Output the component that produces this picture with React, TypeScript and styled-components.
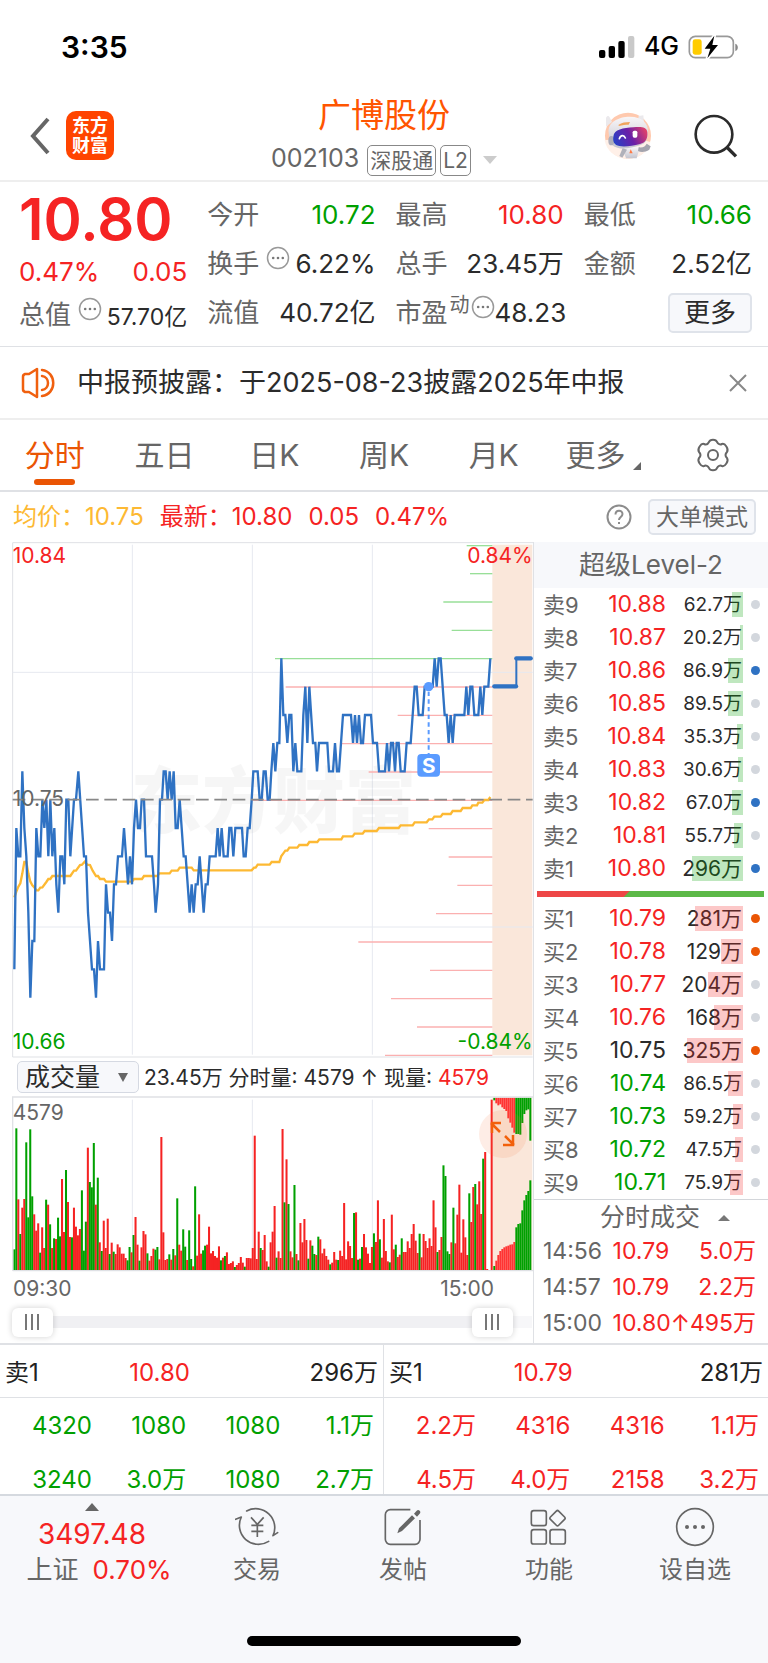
import React from "react";
import styled, { createGlobalStyle } from "styled-components";

const RED = "#f52323";
const GREEN = "#00a000";
const ORANGE = "#ea5504";
const BLUE = "#2f72c3";
const GREY = "#666666";
const INK = "#2b2b2b";
const LINE = "#dfe1e5";

type Tone = "red" | "green" | "ink" | "grey" | "amber";
const tones: Record<Tone, string> = {
  red: RED,
  green: GREEN,
  ink: INK,
  grey: GREY,
  amber: "#fdb933",
};

const GlobalStyle = createGlobalStyle`
  *, *::before, *::after { box-sizing: border-box; }
  body {
    margin: 0;
    background: #fff;
    color: ${INK};
    font-family: Inter, "Noto Sans CJK SC", sans-serif;
    font-size: 24px;
  }
  button, select, input { font: inherit; color: inherit; margin: 0; padding: 0; }
  button { background: none; border: 0; cursor: pointer; }
  a { color: inherit; text-decoration: none; }
  h1, h2, p, dl, dd, dt, ul, ol { margin: 0; padding: 0; font-weight: 400; list-style: none; }
  svg { display: block; }
`;

const Page = styled.div`
  display: flex;
  flex-direction: column;
  min-height: 100vh;
  line-height: 1;
  white-space: nowrap;
`;

/* ---------- status bar ---------- */

const StatusBar = styled.div`
  display: flex;
  align-items: center;
  justify-content: space-between;
  height: 95px;
  padding: 0 29px 2px 61px;
  color: #000;
`;

const Clock = styled.time`
  font-size: 30px;
  font-weight: 600;
`;

const StatusIcons = styled.div`
  display: flex;
  align-items: center;
  gap: 9px;
  font-size: 25px;
  font-weight: 500;
`;

/* ---------- header ---------- */

const Header = styled.header`
  display: grid;
  grid-template-columns: 1fr auto 1fr;
  align-items: center;
  height: 87px;
  padding: 0 30px 4px;
  border-bottom: 2px solid #eeeeee;
`;

const HeaderSide = styled.div<{ $end?: boolean }>`
  display: flex;
  align-items: center;
  justify-content: ${(p) => (p.$end ? "flex-end" : "flex-start")};
  gap: ${(p) => (p.$end ? 42 : 16)}px;
`;

const Logo = styled.a`
  display: grid;
  place-content: center;
  width: 48px;
  height: 49px;
  border-radius: 10px;
  background: #ff4400;
  color: #fff;
  font-size: 18px;
  font-weight: 700;
  line-height: 20px;
  text-align: center;
`;

const Title = styled.div`
  display: flex;
  flex-direction: column;
  align-items: center;
  gap: 11px;
`;

const StockName = styled.h1`
  color: #ff5500;
  font-size: 33px;
  line-height: 38px;
`;

const CodeRow = styled.div`
  display: flex;
  align-items: center;
  gap: 4px;
  color: ${GREY};
  font-size: 25px;
`;

const Code = styled.span`
  padding: 0 4px 4px 0;
`;

const Tag = styled.span`
  padding: 0 2px;
  border: 1px solid #888;
  border-radius: 5px;
  font-size: 21px;
  line-height: 29px;
`;

const Caret = styled.svg`
  margin-left: 8px;
`;

/* ---------- quote ---------- */

const Quote = styled.section`
  display: grid;
  grid-template-columns: repeat(4, minmax(0, 1fr));
  column-gap: 20px;
  padding: 8px 16px 9px 19px;
  border-bottom: 1px solid ${LINE};
`;

const QuoteColumn = styled.dl<{ $lead?: boolean }>`
  display: grid;
  grid-template-columns: minmax(0, 1fr);
  grid-template-rows: ${(p) => (p.$lead ? "58px 48px 38px" : "repeat(3, 49px)")};
`;

const QuoteRow = styled.div`
  display: flex;
  align-items: center;
  justify-content: space-between;
`;

const QuoteLabel = styled.dt`
  display: flex;
  align-items: center;
  gap: 7px;
  color: ${GREY};
  font-size: 26px;

  svg { margin-bottom: 12px; }
`;

const LabelNote = styled.span`
  margin: 0 -6px 16px -5px;
  font-size: 20px;
`;

const QuoteValue = styled.dd<{ $tone: Tone; $small?: boolean }>`
  color: ${(p) => tones[p.$tone]};
  font-size: ${(p) => (p.$small ? 23 : 26)}px;
  padding-top: ${(p) => (p.$small ? 4 : 0)}px;
`;

const LastPrice = styled.dd`
  color: ${RED};
  font-size: 58px;
  font-weight: 600;
`;

const SoftButton = styled.button`
  border: 2px solid #dfe3ea;
  border-radius: 5px;
  background: #f7f8fb;
  color: ${GREY};
  font-size: 23px;
  line-height: 32px;
  padding: 0 6px;
`;

const MoreButton = styled(SoftButton)`
  padding: 0 14px;
  color: ${INK};
  font-size: 26px;
  line-height: 36px;
  margin-left: auto;
`;

/* ---------- notice ---------- */

const Notice = styled.section`
  display: flex;
  align-items: center;
  gap: 20px;
  height: 73px;
  padding: 0 21px;
  border-bottom: 2px solid #eeeeee;
  font-size: 27px;
`;

const NoticeLink = styled.a`
  flex: 1;
`;

/* ---------- tabs ---------- */

const Tabs = styled.nav`
  display: grid;
  grid-template-columns: repeat(7, minmax(0, 1fr));
  height: 72px;
  border-bottom: 2px solid ${LINE};
`;

const Tab = styled.button<{ $active?: boolean }>`
  position: relative;
  display: flex;
  align-items: center;
  justify-content: center;
  gap: 8px;
  color: ${(p) => (p.$active ? ORANGE : GREY)};
  font-size: 30px;

  &::after {
    content: ${(p) => (p.$active ? '""' : "none")};
    position: absolute;
    left: calc(50% - 21px);
    bottom: 5px;
    width: 41px;
    height: 6px;
    border-radius: 3px;
    background: ${ORANGE};
  }

  svg.corner { margin-top: 22px; }
`;

/* ---------- legend ---------- */

const Legend = styled.div`
  display: flex;
  align-items: center;
  justify-content: space-between;
  height: 50px;
  padding: 0 12px 0 13px;
`;

const LegendGroup = styled.div`
  display: flex;
  align-items: center;
  gap: 16px;
`;

const LegendItem = styled.span<{ $tone: Tone }>`
  color: ${(p) => tones[p.$tone]};
  font-size: 24px;
`;

/* ---------- market area ---------- */

const Market = styled.main`
  display: grid;
  grid-template-columns: minmax(0, 1fr) 235px;
  border-bottom: 2px solid ${LINE};
`;

const ChartColumn = styled.section`
  display: flex;
  flex-direction: column;
  padding-left: 12px;
`;

const Chart = styled.svg`
  width: 100%;
  height: auto;
  font-family: Inter, "Noto Sans CJK SC", sans-serif;
`;

const VolumeBar = styled.div`
  display: flex;
  align-items: center;
  gap: 5px;
  height: 38px;
  padding-left: 5px;
  font-size: 21px;
`;

const SelectBox = styled.label`
  position: relative;
  display: flex;

  svg {
    position: absolute;
    right: 11px;
    top: 12px;
    pointer-events: none;
  }
`;

const IndexSelect = styled.select`
  appearance: none;
  width: 122px;
  height: 32px;
  padding: 0 7px;
  border: 1px solid #d5d9e2;
  border-radius: 5px;
  background: #f7f8fb;
  font-size: 25px;
  line-height: 30px;
`;

const Emphasis = styled.span`
  color: ${RED};
`;

const VolumePane = styled.div`
  position: relative;
`;

const ExpandButton = styled.button`
  position: absolute;
  top: 14px;
  right: 6px;
  width: 48px;
  height: 48px;
  border-radius: 50%;
  background: rgba(250, 110, 50, 0.12);
`;

const TimeAxis = styled.div`
  display: flex;
  justify-content: space-between;
  padding: 5px 39px 0 1px;
  color: ${GREY};
  font-size: 21px;
  line-height: 24px;
`;

const RangeSlider = styled.div`
  display: grid;
  margin: 6px 0 5px;
  width: 520px;
  max-width: 100%;
`;

const RangeInput = styled.input<{ $track?: boolean }>`
  grid-area: 1 / 1;
  appearance: none;
  width: 100%;
  height: 30px;
  background: ${(p) =>
    p.$track
      ? "linear-gradient(#f0f0f3, #f0f0f3) left center / 92% 12px no-repeat, linear-gradient(#f7f7f9, #f7f7f9) center / 100% 12px no-repeat"
      : "none"};
  pointer-events: none;

  &::-webkit-slider-thumb {
    appearance: none;
    pointer-events: auto;
    width: 41px;
    height: 29px;
    border-radius: 6px;
    background:
      linear-gradient(#777, #777) 13px center / 2px 16px no-repeat,
      linear-gradient(#777, #777) 19px center / 2px 16px no-repeat,
      linear-gradient(#777, #777) 25px center / 2px 16px no-repeat,
      #fff;
    box-shadow: 0 0 6px rgba(0, 0, 0, 0.18);
  }
`;

/* ---------- order book ---------- */

const BookColumn = styled.aside`
  border-left: 1px solid ${LINE};
`;

const BookTitle = styled.h2`
  background: #f7f8fb;
  color: ${GREY};
  font-size: 26px;
  line-height: 46px;
  text-align: center;
`;

const BookTable = styled.table`
  width: 100%;
  border-collapse: collapse;
  table-layout: fixed;

  td, th { height: 33px; padding: 0; font-weight: 400; }
`;

const LevelName = styled.th`
  width: 56px;
  color: ${GREY};
  font-size: 22px;
  text-align: left;

  && { padding-left: 9px; }
`;

const LevelPrice = styled.td<{ $tone: Tone }>`
  color: ${(p) => tones[p.$tone]};
  font-size: 23px;
  text-align: right;
`;

const LevelVolume = styled.td<{ $long: boolean }>`
  position: relative;
  width: 77px;
  font-size: ${(p) => (p.$long ? 19 : 21)}px;
  text-align: right;

  && { padding-right: 1px; }
`;

const DepthBar = styled.i<{ $buy: boolean }>`
  position: absolute;
  top: 4px;
  right: 0;
  height: 25px;
  background: ${(p) => (p.$buy ? "rgba(245, 35, 35, 0.25)" : "rgba(0, 160, 0, 0.25)")};
`;

const LevelDot = styled.td<{ $color: string }>`
  width: 25px;

  &::before {
    content: "";
    display: block;
    width: 9px;
    height: 9px;
    margin-left: 8px;
    border-radius: 50%;
    background: ${(p) => p.$color};
  }
`;

const RatioBar = styled.div`
  height: 6px;
  margin: 6px 4px 5px 3px;
  background: linear-gradient(135deg, #ee4646 65px, #5cb947 66px);
`;

const TradesHead = styled.button`
  display: flex;
  align-items: center;
  justify-content: center;
  gap: 18px;
  width: 100%;
  height: 36px;
  padding-left: 28px;
  border-top: 1px solid #d3d6da;
  color: ${GREY};
  font-size: 25px;
`;

const TradesTable = styled.table`
  width: 100%;
  border-collapse: collapse;
  font-size: 23px;

  td { height: 36px; padding: 0 0 3px; color: ${RED}; }
  td:first-child { padding-left: 9px; color: ${GREY}; }
  td:nth-child(2) { width: 76px; }
  td:last-child { width: 76px; padding-right: 12px; text-align: right; }
`;

/* ---------- order detail ---------- */

const Details = styled.section`
  display: grid;
  grid-template-columns: 1fr 1fr;
  height: 149px;
  overflow: hidden;
`;

const DetailTable = styled.table<{ $tone: Tone }>`
  width: 100%;
  height: max-content;
  border-collapse: collapse;
  table-layout: fixed;
  border-right: 1px solid ${LINE};
  color: ${(p) => tones[p.$tone]};

  &:last-child { border-right: 0; }

  td {
    height: 54px;
    padding: 3px 9px 0 0;
    font-size: 24px;
    text-align: right;
  }
`;

const LeadColumn = styled.col`
  width: 101px;
`;

const DetailHead = styled.th`
  padding: 0;
  border-bottom: 1px solid ${LINE};
  font-weight: 400;
`;

const DetailHeadRow = styled.div`
  display: grid;
  grid-template-columns: 1fr 1fr 1fr;
  padding: 3px 5px 0;
  color: #222;
  font-size: 24px;
  line-height: 49px;
  text-align: left;

  span:last-child { text-align: right; }
`;

/* ---------- bottom navigation ---------- */

const BottomBar = styled.footer`
  flex: 1;
  display: flex;
  flex-direction: column;
  justify-content: space-between;
  background: #f7f8fb;
  border-top: 2px solid #d5d9df;
`;

const BottomNav = styled.nav`
  display: grid;
  grid-template-columns: 184fr repeat(4, 146fr);
`;

const IndexLink = styled.a`
  display: flex;
  flex-direction: column;
  align-items: center;
  padding-top: 7px;
  color: ${RED};
  font-size: 28px;
  line-height: 46px;
`;

const IndexMove = styled.span`
  display: flex;
  gap: 14px;
  padding-left: 14px;
  font-size: 26px;
  line-height: 26px;
`;

const IndexName = styled.span`
  color: ${GREY};
`;

const NavLink = styled.a`
  display: flex;
  flex-direction: column;
  align-items: center;
  gap: 6px;
  padding-top: 10px;
  color: ${GREY};
  font-size: 24px;
  line-height: 32px;
`;

const HomeIndicator = styled.div`
  width: 274px;
  height: 10px;
  margin: 0 auto 17px;
  border-radius: 5px;
  background: #000;
`;

/* ---------- data ---------- */

const priceSteps =
  "43,-6 49,-1 55,-2 61,-2 67,1 73,-1 79,-2 85,-4 91,-7 97,-5 103,-5 109,-1 115,-2 121,-2 127,0 133,-1 139,0 145,-2 151,0 157,-2 163,-1 169,-3 175,-4 181,-2 187,-2 193,-3 199,0 205,0 211,-2 222,0 228,0 235,1 252,-2 258,-2 264,-4 270,-5 276,-6 282,-6 288,-7 294,-5 300,-6 312,-6 318,-3 324,-4 330,-4 336,-5 342,-3 348,-3 354,-2 366,-2 372,-1 378,-2 384,-3 390,-2 396,-3 402,-1 408,0 414,-1 420,-1 425,0 432,0 438,-2 456,-2 462,-3 467,-4 474,-3 480,0 486,0 491,1 497,1 503,0 509,1 515,0 521,1 527,-1 533,-1 539,0 545,-1 551,-2 557,-2 563,-3 569,-4 575,-3 581,-4 587,-3 593,-3 599,-2 605,-3 611,-4 617,-3 623,-3 629,-2 647,-2 653,-1 659,-2 665,-1 671,-2 683,-2 688,-1 694,-1 700,-2 706,-1 726,-1 731,-2 737,-2 743,-1 749,-1 755,0 760,1 773,1 779,0 785,0 791,1 797,1 803,0 809,0 814,1 820,2 826,1 832,2 838,2 844,5 850,3 856,3 862,2 868,3 874,3 880,1 886,2 892,1 904,1 910,3 916,4 922,2 928,4 939,2 946,2 951,1 957,2 982,2 987,1 999,1 1005,2 1011,1 1017,1 1023,2 1029,3 1053,3 1059,2 1065,3 1071,2 1077,3 1083,2 1089,2 1095,3 1113,3 1119,2 1131,2 1137,1 1155,1 1161,2 1167,1 1173,2 1179,2 1185,1 1190,2 1196,2 1202,1 1214,1 1220,2 1232,2 1238,3 1244,4 1250,4 1256,3 1268,3 1274,4 1298,4 1304,5 1310,4 1316,5 1322,5 1328,4 1334,3 1340,3 1346,2 1352,3 1358,2 1364,3 1393,3 1399,4 1405,3 1411,4 1417,4 1423,3 1435,3 1441,4 1447,3 1453,4 1465,4 1471,5";

const pricePoints = priceSteps
  .split(" ")
  .map((pair) => {
    const [x, ticks] = pair.split(",").map(Number);
    return `${x},${Math.round(779 - ticks * 84.8)}`;
  })
  .join(" ");

const averagePoints =
  "43,1072 49,1055 55,1040 61,1030 67,1000 73,966 79,966 85,1000 91,1025 97,1036 103,1042 109,1051 115,1051 121,1043 127,1042 139,1026 145,1017 151,1017 157,1008 211,1008 222,992 228,992 240,975 246,974 254,965 262,974 270,975 278,992 288,1008 294,1008 300,1017 312,1017 318,1025 396,1025 402,1017 426,1017 432,1008 472,1008 478,1000 509,1000 515,992 533,992 539,983 575,983 581,991 755,991 762,983 767,983 773,974 809,974 815,966 838,966 844,948 850,940 856,932 862,932 868,923 892,923 898,915 922,915 928,906 952,906 958,898 1024,898 1029,889 1058,889 1064,881 1088,881 1094,873 1130,873 1137,864 1196,864 1202,856 1238,856 1244,847 1280,847 1287,838 1297,838 1303,830 1322,830 1328,822 1352,822 1358,813 1382,813 1388,804 1412,804 1417,796 1431,796 1435,788 1447,788 1453,780 1465,780 1471,771";

const depthLines: [number, number, boolean][] = [
  [17, 1400, false], [101, 1410, false], [186, 1330, false], [271, 1355, false], [356, 825, false],
  [441, 857, true], [526, 1193, true], [611, 1026, true], [696, 1106, true], [781, 757, true],
  [866, 1286, true], [951, 1346, true], [1036, 1372, true], [1121, 1308, true], [1206, 1075, true],
  [1291, 1290, true], [1376, 1173, true], [1461, 1251, true], [1546, 1155, true],
];

const volumeBars =
  "g598 g235 r448 g552 r473 r447 g277 g502 g238 g439 r493 r542 r520 g608 r532 r594 g449 r464 g523 r594 g565 r567 g503 g559 r387 r546 g360 r456 r561 g562 r473 r530 r556 r537 g421 g602 g515 r293 g396 g412 g279 r464 g383 r577 g603 r512 r594 r506 g612 r578 g605 r612 r583 r592 r611 r611 r624 g631 g591 r607 g555 r501 r584 g632 r592 r543 r553 g610 r632 r618 r596 g599 g591 r628 r261 r547 r630 r627 g613 r629 g597 r616 g445 r584 r602 g538 g590 r630 g541 g627 r649 g409 r617 r493 r611 g601 g587 r584 r530 r610 r603 r618 r623 r589 g631 r623 g618 r607 r642 r639 r634 g651 r645 r639 r621 r638 g650 r624 r624 r625 r594 r257 r627 r545 g594 r600 r555 r634 g650 r577 r545 r468 g623 r604 r624 r237 g457 r328 g462 r604 r622 g405 r612 g631 r519 r577 r507 r570 g626 r571 g587 g612 r615 g560 r568 r610 r596 r618 r629 g643 r638 r606 r629 g630 r602 r618 r459 r628 r574 r588 r624 g489 r487 g629 r626 g591 r552 r592 r611 r639 r591 g550 r576 r451 g568 r623 r507 r603 r634 g637 r494 r598 g584 r621 r614 g565 r606 r606 r574 r594 r552 r522 r572 r609 g551 r622 r552 r573 r594 r565 r588 r451 r532 g606 r600 r561 g346 g378 g604 g612 r577 g473 r580 r494 r404 r608 r508 r562 r615 g430 r516 r411 g402 r463 r394 r492 g326 r306 r657"
    .split(" ")
    .map((item) => ({ up: item[0] === "r", top: Number(item.slice(1)) }));

const auctionTop = [151, 160, 166, 163, 172, 177, 183, 205, 218, 233, 248, 252, 252, 254, 219, 192, 181, 178, 272];
const auctionBottom = [648, 632, 615, 603, 597, 592, 589, 587, 584, 583, 576, 532, 522, 520, 481, 451, 435, 423, 391];
const auctionColor = (i: number) => (i === 0 || i > 10 ? GREEN : "#f33");

interface Level {
  name: string;
  price: string;
  volume: string;
  bar: number;
  tone?: Tone;
  marked?: boolean;
}

const sells: Level[] = [
  { name: "卖9", price: "10.88", volume: "62.7万", bar: 11 },
  { name: "卖8", price: "10.87", volume: "20.2万", bar: 3 },
  { name: "卖7", price: "10.86", volume: "86.9万", bar: 15, marked: true },
  { name: "卖6", price: "10.85", volume: "89.5万", bar: 15 },
  { name: "卖5", price: "10.84", volume: "35.3万", bar: 6 },
  { name: "卖4", price: "10.83", volume: "30.6万", bar: 5 },
  { name: "卖3", price: "10.82", volume: "67.0万", bar: 11, marked: true },
  { name: "卖2", price: "10.81", volume: "55.7万", bar: 9 },
  { name: "卖1", price: "10.80", volume: "296万", bar: 51, marked: true },
];

const buys: Level[] = [
  { name: "买1", price: "10.79", volume: "281万", bar: 48, marked: true },
  { name: "买2", price: "10.78", volume: "129万", bar: 22, marked: true },
  { name: "买3", price: "10.77", volume: "204万", bar: 35 },
  { name: "买4", price: "10.76", volume: "168万", bar: 29 },
  { name: "买5", price: "10.75", volume: "325万", bar: 56, tone: "ink", marked: true },
  { name: "买6", price: "10.74", volume: "86.5万", bar: 15, tone: "green" },
  { name: "买7", price: "10.73", volume: "59.2万", bar: 10, tone: "green" },
  { name: "买8", price: "10.72", volume: "47.5万", bar: 8, tone: "green" },
  { name: "买9", price: "10.71", volume: "75.9万", bar: 13, tone: "green" },
];

const trades = [
  ["14:56", "10.79", "5.0万"],
  ["14:57", "10.79", "2.2万"],
  ["15:00", "10.80↑", "495万"],
];

/* ---------- icons ---------- */

const InfoDots = () => (
  <svg width="24" height="24" viewBox="0 0 24 24" fill="none" stroke="#999" strokeWidth="1.5" aria-hidden="true">
    <circle cx="12" cy="12" r="10.5" />
    <g fill="#777" stroke="none">
      <circle cx="7.2" cy="12" r="1.3" />
      <circle cx="12" cy="12" r="1.3" />
      <circle cx="16.8" cy="12" r="1.3" />
    </g>
  </svg>
);

const SignalIcon = () => (
  <svg width="36" height="22" viewBox="0 0 108 66" aria-label="信号">
    <rect x="0" y="42" width="19" height="24" rx="6" />
    <rect x="29" y="30" width="19" height="36" rx="6" />
    <rect x="58" y="15" width="19" height="51" rx="6" />
    <rect x="87" y="0" width="19" height="66" rx="6" fill="#c9c9c9" />
  </svg>
);

const BatteryIcon = () => (
  <svg width="51" height="24" viewBox="0 0 153 72" aria-label="电量">
    <rect x="4" y="4" width="132" height="64" rx="18" fill="none" stroke="#999" strokeWidth="5" />
    <path d="M142 26c10 3 10 19 0 22z" fill="#888" />
    <rect x="14" y="13" width="27" height="46" rx="7" fill="#ffcc00" />
    <path d="M79 2 50 41h17l-9 29 32-40H73z" fill="#000" stroke="#fff" strokeWidth="10" strokeLinejoin="round" paintOrder="stroke" />
  </svg>
);

const RobotIcon = () => (
  <svg width="48" height="48" viewBox="0 0 144 144" aria-hidden="true">
    <defs>
      <linearGradient id="visor" x1="0" y1="0.6" x2="1" y2="0.3">
        <stop offset="0" stopColor="#2b3fc4" />
        <stop offset="0.5" stopColor="#6a1fa8" />
        <stop offset="1" stopColor="#e0406a" />
      </linearGradient>
      <linearGradient id="shell" x1="0" y1="0" x2="0" y2="1">
        <stop offset="0" stopColor="#f8f6f8" />
        <stop offset="1" stopColor="#c4c4ce" />
      </linearGradient>
    </defs>
    <circle cx="72" cy="71" r="69" fill="#ffc9ae" />
    <path d="M2 84c4 30 32 57 70 56 34 0 60-20 67-50l-30-8z" fill="#fff0e8" />
    <path d="M54 105h54l-10 34H66z" fill="url(#shell)" />
    <path d="M56 108 46 132l9 5 14-24z" fill="#b0b1ba" />
    <path d="M104 106c14 2 20-4 24-11l12 8-4 10c-12 8-26 8-34 4z" fill="#a4a4ae" />
    <path d="M6 18c4-8 8-8 12 0l6 12-18 14zM104 12l14-2 2 24-18-8z" fill="#ebe9ec" />
    <path d="M14 62C10 32 42 14 78 14s54 20 54 44c0 20-4 36-24 42-24 8-54 14-72 6C20 100 16 82 14 62z" fill="url(#shell)" />
    <ellipse cx="22" cy="86" rx="9" ry="14" fill="#adaeba" />
    <path d="M28 74c2-22 30-26 60-28 22-2 40-2 42 14 2 18-4 32-22 36-22 5-46 10-62 6-15-3-20-12-18-28z" fill="url(#visor)" />
    <path d="M46 80c4-12 14-12 18-2" fill="none" stroke="#fff" strokeWidth="5" strokeLinecap="round" />
    <rect x="86" y="56" width="14" height="21" rx="5" fill="#fff" />
    <path d="M44 38c8-6 22-8 34-8l-4 8c-10 0-18 1-30 4z" fill="#f0a45c" />
    <path d="m80 112 6 12H76z" fill="#ff7a45" />
  </svg>
);

const SearchIcon = () => (
  <svg width="44" height="44" viewBox="0 0 132 132" fill="none" stroke="#2b2b2b" strokeWidth="8" aria-hidden="true">
    <circle cx="60" cy="61" r="55" />
    <path d="m98 99 28 28" strokeWidth="10" />
  </svg>
);

const YuanIcon = () => (
  <svg width="44" height="42" viewBox="0 0 132 126" fill="none" stroke="#666" strokeWidth="5" strokeLinecap="round" strokeLinejoin="round" aria-hidden="true">
    <path d="M35 15a57 57 0 0 1 79 74l14-9" />
    <path d="M2 40l17-7a57 57 0 0 0 82 73" />
    <path d="m48 34 19 21 19-21M67 55v38M49 58h36M49 76h36" strokeLinecap="butt" />
  </svg>
);

const ComposeIcon = () => (
  <svg width="42" height="42" viewBox="0 0 126 126" fill="none" stroke="#666" strokeWidth="5" aria-hidden="true">
    <path d="M85 11H25a15 15 0 0 0-15 15v74a15 15 0 0 0 15 15h74a15 15 0 0 0 15-15V42" />
    <path d="m46 82 5-15 39-39 9 9-39 38zM96 23l8-9c6-6 15 3 9 9l-8 9z" fill="#666" stroke="none" />
  </svg>
);

const GridIcon = () => (
  <svg width="42" height="42" viewBox="0 0 126 126" fill="none" stroke="#666" strokeWidth="5" strokeLinejoin="round" aria-hidden="true">
    <rect x="10" y="14" width="45" height="45" rx="7" />
    <rect x="10" y="71" width="45" height="43" rx="7" />
    <rect x="66" y="71" width="46" height="43" rx="7" />
    <rect x="71" y="19" width="35" height="35" rx="5" transform="rotate(45 88.5 36.5)" />
  </svg>
);

const MoreIcon = () => (
  <svg width="42" height="42" viewBox="0 0 126 126" fill="none" stroke="#666" strokeWidth="5" aria-hidden="true">
    <circle cx="63" cy="63" r="55" />
    <g fill="#666" stroke="none">
      <circle cx="39" cy="63" r="6" />
      <circle cx="63" cy="63" r="6" />
      <circle cx="87" cy="63" r="6" />
    </g>
  </svg>
);

/* ---------- charts ---------- */

const PriceChart = () => (
  <Chart viewBox="36 6 1563 1548" role="img" aria-label="分时走势">
    <rect x="1477" y="14" width="120" height="1532" fill="#fae7da" />
    <g fill="none" stroke={LINE} strokeWidth="3">
      <path d="M38 1551V8H1599M38 1551H1598" />
      <path d="M397 14V1544M757 14V1544M1117 14V1544M38 397H1598M38 1161H1598" stroke="#e6e9f0" />
    </g>
    <text x="392" y="860" fontSize="214" fontWeight="900" fill="#999" opacity="0.08">
      东方财富
    </text>
    {depthLines.map(([y, x, buy]) => (
      <path key={y} d={`M${x} ${y}H1477`} stroke={buy ? "#fbb0b0" : "#98df98"} strokeWidth="4" />
    ))}
    <polyline points={averagePoints} fill="none" stroke="#fdb933" strokeWidth="7" />
    <polyline points={pricePoints} fill="none" stroke={BLUE} strokeWidth="7" />
    <path d="M38 779H1598" stroke="#888" strokeWidth="5" strokeDasharray="38 17" />
    <path d="M1483 439H1548" stroke={BLUE} strokeWidth="13" strokeLinecap="round" />
    <path d="M1549 439V355" stroke={BLUE} strokeWidth="6" />
    <path d="M1549 355H1592" stroke={BLUE} strokeWidth="13" strokeLinecap="round" />
    <circle cx="1286" cy="440" r="14" fill="#5a9bff" />
    <path d="M1286 455V642" stroke="#5a9bff" strokeWidth="6" strokeDasharray="13 10" />
    <rect x="1252" y="642" width="68" height="68" rx="12" fill="#5a9bff" />
    <text x="1286" y="698" fontSize="62" fontWeight="700" fill="#fff" textAnchor="middle">S</text>
    <g fontSize="63">
      <text x="38" y="69" fill={RED}>10.84</text>
      <text x="38" y="798" fill={GREY}>10.75</text>
      <text x="38" y="1527" fill={GREEN}>10.66</text>
      <text x="1598" y="69" fill={RED} textAnchor="end">0.84%</text>
      <text x="1598" y="1527" fill={GREEN} textAnchor="end">-0.84%</text>
    </g>
  </Chart>
);

const VolumeChart = () => (
  <Chart viewBox="36 138 1563 528" role="img" aria-label="成交量">
    <rect x="1477" y="143" width="120" height="517" fill="#fae7da" />
    <path d="M397 149V660M757 149V660M1117 149V660" stroke="#e6e9f0" strokeWidth="3" />
    {volumeBars.map((bar, i) => (
      <rect
        key={i}
        x={40 + i * 5.96}
        y={bar.top}
        width="6.1"
        height={660 - bar.top}
        fill={bar.up ? RED : GREEN}
      />
    ))}
    <rect x="1472" y="149" width="6" height="511" fill={RED} />
    {auctionTop.map((bottom, i) => (
      <rect key={i} x={1480 + i * 6} y="143" width="6" height={bottom - 143} fill={auctionColor(i)} />
    ))}
    {auctionBottom.map((top, i) => (
      <rect key={i} x={1480 + i * 6} y={top} width="6" height={660 - top} fill={auctionColor(i)} />
    ))}
    <path d="M38 662V141H1599M38 662H1599" fill="none" stroke={LINE} strokeWidth="4" />
    <text x="38" y="209" fontSize="63" fill={GREY}>4579</text>
  </Chart>
);

/* ---------- composed parts ---------- */

const Book = ({ levels, side }: { levels: Level[]; side: "sell" | "buy" }) => (
  <BookTable>
    <tbody>
      {levels.map((level) => (
        <tr key={level.name}>
          <LevelName scope="row">{level.name}</LevelName>
          <LevelPrice $tone={level.tone ?? "red"}>{level.price}</LevelPrice>
          <LevelVolume $long={level.volume.length > 4}>
            {level.volume}
            <DepthBar $buy={side === "buy"} style={{ width: level.bar }} />
          </LevelVolume>
          <LevelDot $color={level.marked ? (side === "buy" ? ORANGE : BLUE) : "#d3d7dd"} />
        </tr>
      ))}
    </tbody>
  </BookTable>
);

interface DetailProps {
  head: [string, string, string];
  rows: string[][];
  tone: Tone;
}

const Detail = ({ head, rows, tone }: DetailProps) => (
  <DetailTable $tone={tone}>
    <colgroup>
      <LeadColumn />
      <col />
      <col />
      <col />
    </colgroup>
    <thead>
      <tr>
        <DetailHead colSpan={4}>
          <DetailHeadRow>
            <span>{head[0]}</span>
            <Emphasis>{head[1]}</Emphasis>
            <span>{head[2]}</span>
          </DetailHeadRow>
        </DetailHead>
      </tr>
    </thead>
    <tbody>
      {rows.map((row, i) => (
        <tr key={i}>
          {row.map((cell, j) => (
            <td key={j}>{cell}</td>
          ))}
        </tr>
      ))}
    </tbody>
  </DetailTable>
);

const quoteColumns: { label: string; value: string; tone: Tone; info?: boolean; note?: string }[][] = [
  [
    { label: "今开", value: "10.72", tone: "green" },
    { label: "换手", value: "6.22%", tone: "ink", info: true },
    { label: "流值", value: "40.72亿", tone: "ink" },
  ],
  [
    { label: "最高", value: "10.80", tone: "red" },
    { label: "总手", value: "23.45万", tone: "ink" },
    { label: "市盈", value: "48.23", tone: "ink", info: true, note: "动" },
  ],
  [
    { label: "最低", value: "10.66", tone: "green" },
    { label: "金额", value: "2.52亿", tone: "ink" },
  ],
];

export default function App() {
  return (
    <Page>
      <GlobalStyle />
      <StatusBar>
        <Clock>3:35</Clock>
        <StatusIcons>
          <SignalIcon />
          <span>4G</span>
          <BatteryIcon />
        </StatusIcons>
      </StatusBar>

      <Header>
        <HeaderSide>
          <button aria-label="返回">
            <svg width="20" height="38" viewBox="0 0 20 38" fill="none" stroke="#666" strokeWidth="4">
              <path d="M18 2 3 19l15 17" />
            </svg>
          </button>
          <Logo href="#home">
            <span>东方</span>
            <span>财富</span>
          </Logo>
        </HeaderSide>
        <Title>
          <StockName>广博股份</StockName>
          <CodeRow>
            <Code>002103</Code>
            <Tag>深股通</Tag>
            <Tag>L2</Tag>
            <Caret width="14" height="8" viewBox="0 0 14 8" aria-hidden="true">
              <path d="M0 0h14L7 8z" fill="#ccc" />
            </Caret>
          </CodeRow>
        </Title>
        <HeaderSide $end>
          <button aria-label="智能助手">
            <RobotIcon />
          </button>
          <button aria-label="搜索">
            <SearchIcon />
          </button>
        </HeaderSide>
      </Header>

      <Quote>
        <QuoteColumn $lead>
          <QuoteRow>
            <LastPrice>10.80</LastPrice>
          </QuoteRow>
          <QuoteRow>
            <QuoteValue $tone="red">0.47%</QuoteValue>
            <QuoteValue $tone="red">0.05</QuoteValue>
          </QuoteRow>
          <QuoteRow>
            <QuoteLabel>
              总值
              <InfoDots />
            </QuoteLabel>
            <QuoteValue $tone="ink" $small>57.70亿</QuoteValue>
          </QuoteRow>
        </QuoteColumn>
        {quoteColumns.map((column, i) => (
          <QuoteColumn key={i}>
            {column.map((item) => (
              <QuoteRow key={item.label}>
                <QuoteLabel>
                  {item.label}
                  {item.note && <LabelNote>{item.note}</LabelNote>}
                  {item.info && <InfoDots />}
                </QuoteLabel>
                <QuoteValue $tone={item.tone}>{item.value}</QuoteValue>
              </QuoteRow>
            ))}
            {column.length < 3 && (
              <QuoteRow>
                <MoreButton>更多</MoreButton>
              </QuoteRow>
            )}
          </QuoteColumn>
        ))}
      </Quote>

      <Notice>
        <svg width="36" height="32" viewBox="0 0 36 32" fill="none" stroke="#f0600f" strokeWidth="2.500" strokeLinecap="round" strokeLinejoin="round" aria-hidden="true">
          <path d="M16 2v28l-8-5H4a3 3 0 0 1-2-3V10a3 3 0 0 1 2-3h4zM21 3c15 2 15 24 0 26M21 9c8 1 8 13 0 14" />
        </svg>
        <NoticeLink href="#notice">中报预披露：于2025-08-23披露2025年中报</NoticeLink>
        <button aria-label="关闭">
          <svg width="18" height="18" viewBox="0 0 18 18" stroke="#888" strokeWidth="2">
            <path d="m1 1 16 16M17 1 1 17" />
          </svg>
        </button>
      </Notice>

      <Tabs>
        <Tab $active>分时</Tab>
        <Tab>五日</Tab>
        <Tab>日K</Tab>
        <Tab>周K</Tab>
        <Tab>月K</Tab>
        <Tab>
          更多
          <svg className="corner" width="8" height="8" viewBox="0 0 8 8" aria-hidden="true">
            <path d="M8 0v8H0z" fill="#666" />
          </svg>
        </Tab>
        <Tab aria-label="设置">
          <svg width="34" height="34" viewBox="0 0 34 34" fill="none" stroke="#666" strokeWidth="2" strokeLinejoin="round">
            <path d="M13 4c1-3 7-3 8 0 1 2 3 3 5 2 3-1 7 5 5 8-2 2-2 4 0 6 2 3-2 9-5 8-2-1-4 0-5 2-1 3-7 3-8 0-1-2-3-3-5-2-3 1-7-5-5-8 2-2 2-4 0-6-2-3 2-9 5-8 2 1 4 0 5-2z" />
            <circle cx="17" cy="17" r="5" />
          </svg>
        </Tab>
      </Tabs>

      <Legend>
        <LegendGroup>
          <LegendItem $tone="amber">均价：10.75</LegendItem>
          <LegendItem $tone="red">最新：10.80</LegendItem>
          <LegendItem $tone="red">0.05</LegendItem>
          <LegendItem $tone="red">0.47%</LegendItem>
        </LegendGroup>
        <LegendGroup>
          <button aria-label="帮助">
            <svg width="26" height="26" viewBox="0 0 26 26" fill="none" stroke="#8c8c8c" strokeWidth="2">
              <circle cx="13" cy="13" r="11.5" />
              <path d="M9.5 10.5c0-5 7-5 7-.5 0 3-3.500 3-3.500 6M13 18v2" />
            </svg>
          </button>
          <SoftButton>大单模式</SoftButton>
        </LegendGroup>
      </Legend>

      <Market>
        <ChartColumn>
          <PriceChart />
          <VolumeBar>
            <SelectBox>
              <IndexSelect aria-label="指标" defaultValue="vol">
                <option value="vol">成交量</option>
              </IndexSelect>
              <svg width="10" height="9" viewBox="0 0 10 9" aria-hidden="true">
                <path d="M0 0h10L5 9z" fill="#666" />
              </svg>
            </SelectBox>
            <span>
              23.45万 分时量: 4579 ↑ 现量: <Emphasis>4579</Emphasis>
            </span>
          </VolumeBar>
          <VolumePane>
            <VolumeChart />
            <ExpandButton aria-label="展开">
              <svg width="48" height="48" viewBox="0 0 48 48" fill="none" stroke="#f2600c" strokeWidth="2.500">
                <path d="m21 22-9-9M13 23V13h9M26 26l9 9M34 25v10h-10" />
              </svg>
            </ExpandButton>
          </VolumePane>
          <TimeAxis>
            <span>09:30</span>
            <span>15:00</span>
          </TimeAxis>
          <RangeSlider>
            <RangeInput type="range" aria-label="开始时间" defaultValue={0} $track />
            <RangeInput type="range" aria-label="结束时间" defaultValue={96} />
          </RangeSlider>
        </ChartColumn>

        <BookColumn>
          <BookTitle>超级Level-2</BookTitle>
          <Book levels={sells} side="sell" />
          <RatioBar />
          <Book levels={buys} side="buy" />
          <TradesHead>
            分时成交
            <svg width="12" height="6" viewBox="0 0 12 6" aria-hidden="true">
              <path d="M0 6h12L6 0z" fill="#777" />
            </svg>
          </TradesHead>
          <TradesTable>
            <tbody>
              {trades.map((row) => (
                <tr key={row[0]}>
                  {row.map((cell, i) => (
                    <td key={i}>{cell}</td>
                  ))}
                </tr>
              ))}
            </tbody>
          </TradesTable>
        </BookColumn>
      </Market>

      <Details>
        <Detail
          tone="green"
          head={["卖1", "10.80", "296万"]}
          rows={[
            ["4320", "1080", "1080", "1.1万"],
            ["3240", "3.0万", "1080", "2.7万"],
          ]}
        />
        <Detail
          tone="red"
          head={["买1", "10.79", "281万"]}
          rows={[
            ["2.2万", "4316", "4316", "1.1万"],
            ["4.5万", "4.0万", "2158", "3.2万"],
          ]}
        />
      </Details>

      <BottomBar>
        <BottomNav>
          <IndexLink href="#index">
            <svg width="14" height="8" viewBox="0 0 14 8" aria-hidden="true">
              <path d="M0 8h14L7 0z" fill="#666" />
            </svg>
            3497.48
            <IndexMove>
              <IndexName>上证</IndexName>
              <span>0.70%</span>
            </IndexMove>
          </IndexLink>
          <NavLink href="#trade">
            <YuanIcon />
            交易
          </NavLink>
          <NavLink href="#post">
            <ComposeIcon />
            发帖
          </NavLink>
          <NavLink href="#features">
            <GridIcon />
            功能
          </NavLink>
          <NavLink href="#watch">
            <MoreIcon />
            设自选
          </NavLink>
        </BottomNav>
        <HomeIndicator />
      </BottomBar>
    </Page>
  );
}
